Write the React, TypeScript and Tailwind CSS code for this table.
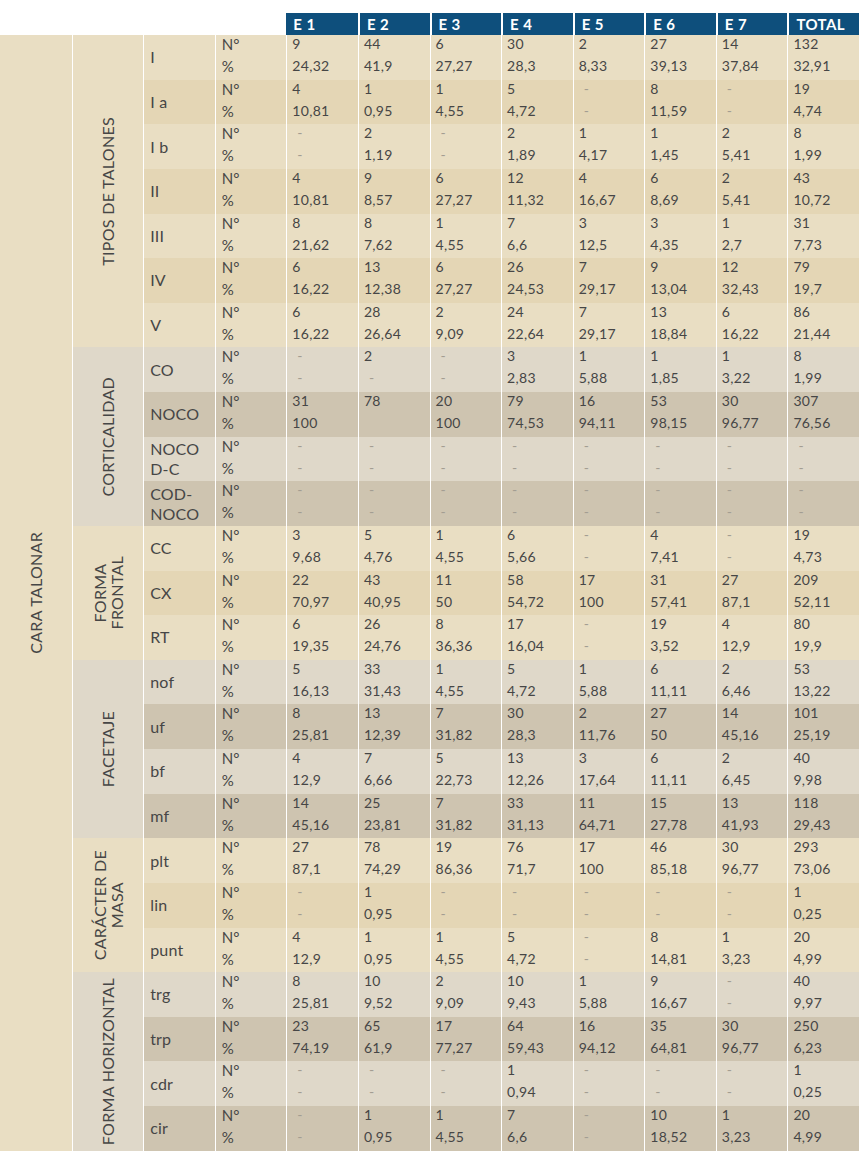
import React from "react";

type Row = { label: string[]; n: string[]; p: string[] };
type Group = { label: string[]; tone: "beige" | "gray"; span: string; rows: Row[] };

const r = (label: string | string[], n: string, p: string): Row => ({
  label: Array.isArray(label) ? label : [label],
  n: n.split(" "),
  p: p.split(" "),
});

const groups: Group[] = [
  {
    label: ["TIPOS DE TALONES"],
    tone: "beige",
    span: "row-[span_7/span_7]",
    rows: [
      r("I", "9 44 6 30 2 27 14 132", "24,32 41,9 27,27 28,3 8,33 39,13 37,84 32,91"),
      r("I a", "4 1 1 5 - 8 - 19", "10,81 0,95 4,55 4,72 - 11,59 - 4,74"),
      r("I b", "- 2 - 2 1 1 2 8", "- 1,19 - 1,89 4,17 1,45 5,41 1,99"),
      r("II", "4 9 6 12 4 6 2 43", "10,81 8,57 27,27 11,32 16,67 8,69 5,41 10,72"),
      r("III", "8 8 1 7 3 3 1 31", "21,62 7,62 4,55 6,6 12,5 4,35 2,7 7,73"),
      r("IV", "6 13 6 26 7 9 12 79", "16,22 12,38 27,27 24,53 29,17 13,04 32,43 19,7"),
      r("V", "6 28 2 24 7 13 6 86", "16,22 26,64 9,09 22,64 29,17 18,84 16,22 21,44"),
    ],
  },
  {
    label: ["CORTICALIDAD"],
    tone: "gray",
    span: "row-[span_4/span_4]",
    rows: [
      r("CO", "- 2 - 3 1 1 1 8", "- - - 2,83 5,88 1,85 3,22 1,99"),
      r("NOCO", "31 78 20 79 16 53 30 307", "100 _ 100 74,53 94,11 98,15 96,77 76,56"),
      r(["NOCO", "D-C"], "- - - - - - - -", "- - - - - - - -"),
      r(["COD-", "NOCO"], "- - - - - - - -", "- - - - - - - -"),
    ],
  },
  {
    label: ["FORMA", "FRONTAL"],
    tone: "beige",
    span: "row-[span_3/span_3]",
    rows: [
      r("CC", "3 5 1 6 - 4 - 19", "9,68 4,76 4,55 5,66 - 7,41 - 4,73"),
      r("CX", "22 43 11 58 17 31 27 209", "70,97 40,95 50 54,72 100 57,41 87,1 52,11"),
      r("RT", "6 26 8 17 - 19 4 80", "19,35 24,76 36,36 16,04 - 3,52 12,9 19,9"),
    ],
  },
  {
    label: ["FACETAJE"],
    tone: "gray",
    span: "row-[span_4/span_4]",
    rows: [
      r("nof", "5 33 1 5 1 6 2 53", "16,13 31,43 4,55 4,72 5,88 11,11 6,46 13,22"),
      r("uf", "8 13 7 30 2 27 14 101", "25,81 12,39 31,82 28,3 11,76 50 45,16 25,19"),
      r("bf", "4 7 5 13 3 6 2 40", "12,9 6,66 22,73 12,26 17,64 11,11 6,45 9,98"),
      r("mf", "14 25 7 33 11 15 13 118", "45,16 23,81 31,82 31,13 64,71 27,78 41,93 29,43"),
    ],
  },
  {
    label: ["CARÁCTER DE", "MASA"],
    tone: "beige",
    span: "row-[span_3/span_3]",
    rows: [
      r("plt", "27 78 19 76 17 46 30 293", "87,1 74,29 86,36 71,7 100 85,18 96,77 73,06"),
      r("lin", "- 1 - - - - - 1", "- 0,95 - - - - - 0,25"),
      r("punt", "4 1 1 5 - 8 1 20", "12,9 0,95 4,55 4,72 - 14,81 3,23 4,99"),
    ],
  },
  {
    label: ["FORMA HORIZONTAL"],
    tone: "gray",
    span: "row-[span_4/span_4]",
    rows: [
      r("trg", "8 10 2 10 1 9 - 40", "25,81 9,52 9,09 9,43 5,88 16,67 - 9,97"),
      r("trp", "23 65 17 64 16 35 30 250", "74,19 61,9 77,27 59,43 94,12 64,81 96,77 6,23"),
      r("cdr", "- - - 1 - - - 1", "- - - 0,94 - - - 0,25"),
      r("cir", "- 1 1 7 - 10 1 20", "- 0,95 4,55 6,6 - 18,52 3,23 4,99"),
    ],
  },
];

const headers = ["E 1", "E 2", "E 3", "E 4", "E 5", "E 6", "E 7", "TOTAL"];

const rowBg = {
  beige: ["bg-[#e9dec3]", "bg-[#e4d6b5]"],
  gray: ["bg-[#dfd8c9]", "bg-[#cec4b0]"],
};
const groupBg = { beige: "bg-[#e9dec3]", gray: "bg-[#dfd8c9]" };

function Val({ v }: { v: string }) {
  if (v === "_") return <span className="block h-[22px]" />;
  if (v === "-")
    return <span className="block h-[22px] pl-[5px] text-[#a39d92]">-</span>;
  return <span className="block h-[22px]">{v}</span>;
}

export default function App() {
  return (
    <div className="w-[859px] h-[1155px] bg-white pt-[13px] font-['Lato','Noto_Sans',sans-serif] text-[#464646]">
      <div className="grid grid-cols-12 h-[22px]">
        <div className="col-span-4" />
        {headers.map((h, i) => (
          <div
            key={h}
            className={`bg-[#0e4f7c] text-white font-bold text-[15px] leading-[22px] pl-[7px] tracking-[0.4px] ${
              i > 0 ? "border-l-2 border-white" : ""
            }`}
          >
            {h}
          </div>
        ))}
      </div>
      <div className="grid grid-cols-12 grid-rows-[repeat(25,44.64px)]">
        <div className="row-[span_25/span_25] col-start-1 bg-[#e9dec3] flex items-center justify-center">
          <span className="[writing-mode:vertical-rl] rotate-180 text-[16px] leading-[18px] tracking-[0.3px]">
            CARA TALONAR
          </span>
        </div>
        {groups.map((g) => (
          <React.Fragment key={g.label.join(" ")}>
            <div
              className={`${g.span} col-start-2 border-l border-white ${groupBg[g.tone]} flex items-center justify-center`}
            >
              <span className="[writing-mode:vertical-rl] rotate-180 text-[16px] leading-[17px] text-center tracking-[0.3px]">
                {g.label.map((l, i) => (
                  <React.Fragment key={l}>
                    {i > 0 && <br />}
                    {l}
                  </React.Fragment>
                ))}
              </span>
            </div>
            {g.rows.map((row, ri) => {
              const bg = rowBg[g.tone][ri % 2];
              return (
                <React.Fragment key={row.label.join(" ")}>
                  <div
                    className={`col-start-3 border-l border-white ${bg} flex flex-col justify-center pl-[6px] text-[16px] leading-[20px] tracking-[0.2px]`}
                  >
                    {row.label.map((l) => (
                      <span key={l}>{l}</span>
                    ))}
                  </div>
                  <div className={`border-l border-white ${bg} pl-[6px] text-[15px] leading-[22px]`}>
                    <div className="-mt-[2px]">
                      <span className="block h-[22px]">N°</span>
                      <span className="block h-[22px]">%</span>
                    </div>
                  </div>
                  {row.n.map((n, ci) => (
                    <div
                      key={ci}
                      className={`border-l border-white ${bg} pl-[5px] text-[14px] leading-[22px] tracking-[0.3px]`}
                    >
                      <div className="-mt-[2px]">
                        <Val v={n} />
                        <Val v={row.p[ci]} />
                      </div>
                    </div>
                  ))}
                </React.Fragment>
              );
            })}
          </React.Fragment>
        ))}
      </div>
    </div>
  );
}
